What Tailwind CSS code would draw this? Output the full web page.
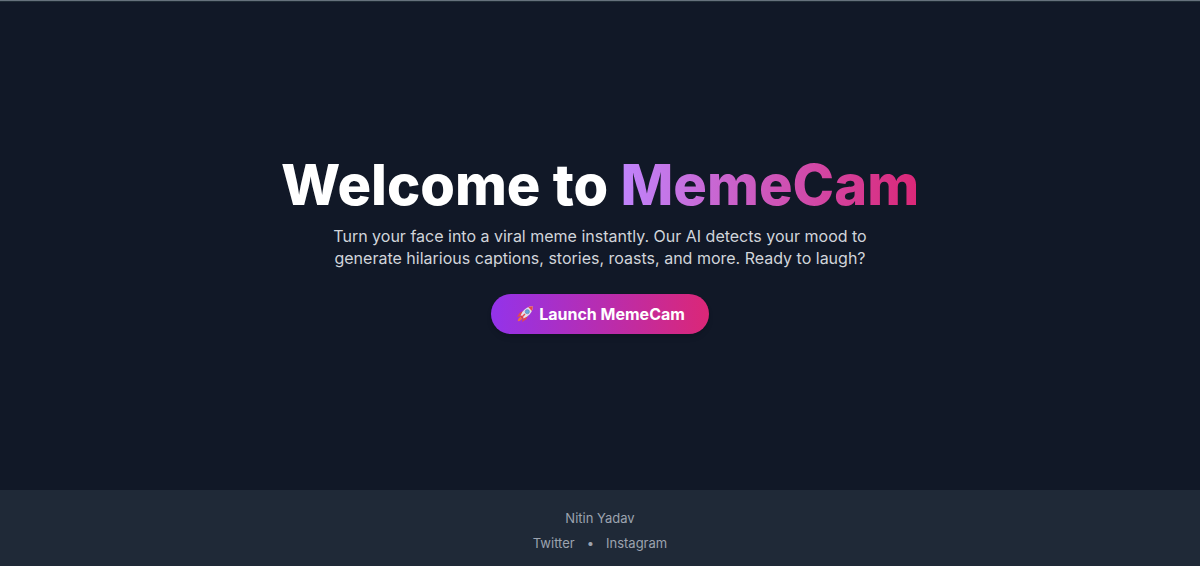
<!DOCTYPE html>
<html lang="en">
<head>
<meta charset="utf-8">
<meta name="viewport" content="width=device-width, initial-scale=1">
<title>MemeCam</title>
<script src="https://cdn.jsdelivr.net/npm/@tailwindcss/browser@4"></script>
</head>
<body class="flex min-h-screen flex-col border-t border-[#66717c] bg-[#111827] font-[Inter,sans-serif] text-white">
<main class="flex flex-1 flex-col items-center justify-center border-t border-[#1f2b35] px-4 text-center">
  <h1 class="mb-3 text-[56px] leading-[56px] font-extrabold">Welcome to <span class="bg-linear-to-r/srgb from-[#c084fc] to-[#db2777] bg-clip-text text-transparent">MemeCam</span></h1>
  <p class="mb-[25px] max-w-[540px] text-[16px] leading-[22px] text-[#d1d5db]">Turn your face into a viral meme instantly. Our AI detects your mood to generate hilarious captions, stories, roasts, and more. Ready to laugh?</p>
  <button type="button" class="mb-px flex items-center gap-1 rounded-full bg-linear-to-r/srgb from-[#9333ea] to-[#db2777] px-6 py-2 text-[16px] leading-6 font-bold shadow-md">
    <svg class="size-5" viewBox="0 0 20 20" aria-hidden="true">
      <path d="M8 7 4.500 9 2 13l4.500-1zM13 12l-2 3.500L7 18l1-4.500z" fill="#e5484d"/>
      <path d="M5.500 13c-1.800.8-2.700 2.500-2.700 4.200 1.700 0 3.400-.9 4.200-2.700z" fill="#f4703c"/>
      <path d="M17.800 2.200c-4.300 0-7.700 1.900-10.300 5.600L5 12.500 7.500 15l4.700-2.500c3.700-2.600 5.600-6 5.600-10.300z" fill="#e3dfec"/>
      <path d="M17.800 2.200c-1.700 0-3.300.3-4.700.9l3.800 3.800c.6-1.400.9-3 .9-4.700z" fill="#e5484d"/>
      <path d="m5.800 11 3.200 3.200-1.500.8L5 12.500z" fill="#c73348"/>
      <path d="m9.500 9.500 1 1L7 14l-1-1z" fill="#e5484d"/>
      <circle cx="12.300" cy="7.700" r="2.100" fill="#62a8df" stroke="#6d87b0" stroke-width=".7"/>
    </svg>
    <span>Launch MemeCam</span>
  </button>
</main>
<footer class="bg-[#1f2937] px-4 pt-[18px] pb-[13px] text-center text-[13px] leading-5 text-[#9ca3af]">
  <p class="mb-[5px]">Nitin Yadav</p>
  <nav class="flex justify-center gap-3"><a href="#">Twitter</a><span>•</span><a href="#">Instagram</a></nav>
</footer>
</body>
</html>
